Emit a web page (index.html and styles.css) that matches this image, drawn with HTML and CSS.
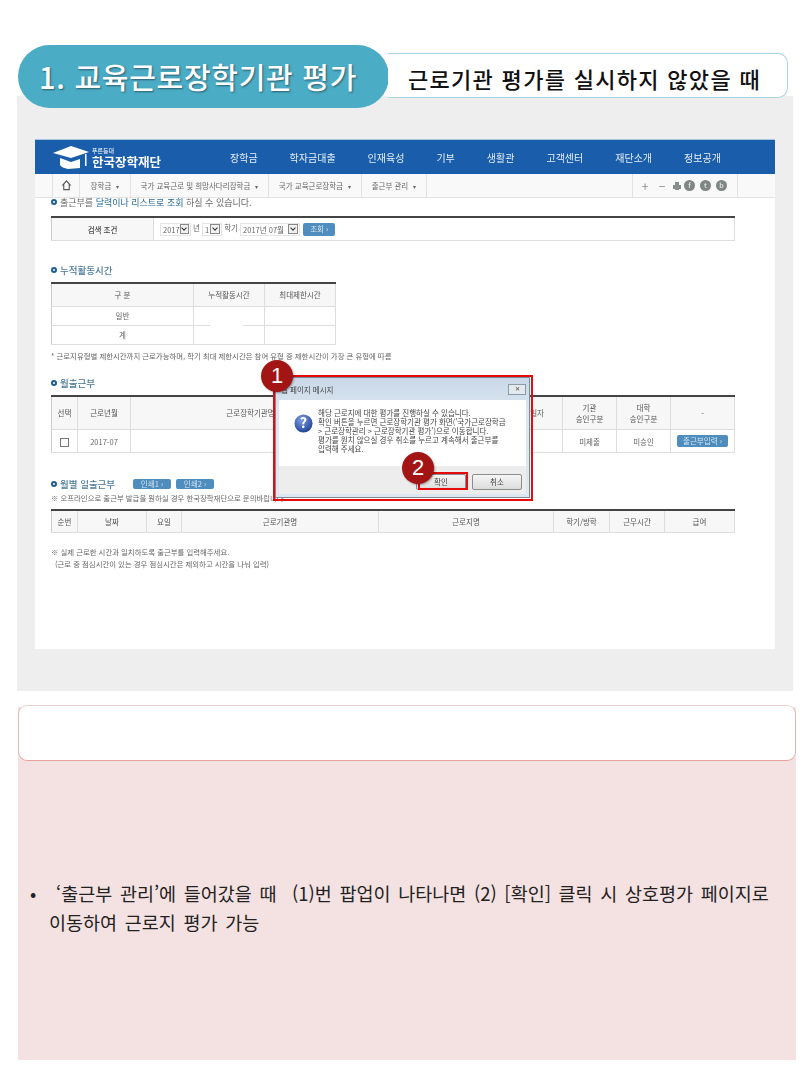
FILE: index.html
```html
<!DOCTYPE html>
<html lang="ko">
<head>
    <meta charset="UTF-8">
    <meta name="viewport" content="width=device-width, initial-scale=1.0">
    <title>교육근로장학기관 평가</title>
    <link rel="stylesheet" href="styles.css">
</head>
<body>
    <div class="title-row">
        <h1 class="title-pill">1. 교육근로장학기관 평가</h1>
        <div class="title-sub">근로기관 평가를 실시하지 않았을 때</div>
    </div>

    <div class="gray-panel">
        <div class="shot-wrap">
            <div class="shot">
                <header class="site-head">
                    <div class="logo">
                        <svg class="logo-cap" viewBox="0 0 36 24" width="36" height="24">
                            <path d="M0 8 L18 1 L36 7 L18 13 Z" fill="#fff"/>
                            <path d="M7 13 L18 17 L27 14 L27 23 L15 24 C11 23 8 22 7 20 Z" fill="#fff"/>
                            <path d="M32 9 L33.500 9 L33.500 21 L32 21 Z" fill="#fff"/>
                        </svg>
                        <div class="logo-text">
                            <span class="logo-small">푸른등대</span>
                            <span class="logo-big">한국장학재단</span>
                        </div>
                    </div>
                    <nav class="main-nav">
                        <a>장학금</a>
                        <a>학자금대출</a>
                        <a>인재육성</a>
                        <a>기부</a>
                        <a>생활관</a>
                        <a>고객센터</a>
                        <a>재단소개</a>
                        <a>정보공개</a>
                    </nav>
                </header>

                <div class="sub-nav">
                    <div class="crumb crumb-home">
                        <svg viewBox="0 0 12 12" width="11" height="11">
                            <path d="M6 1 L10 5.500 L9 5.500 L9 10.500 L3 10.500 L3 5.500 L2 5.500 Z" fill="none" stroke="#555" stroke-width="1.200"/>
                        </svg>
                    </div>
                    <div class="crumb crumb-a">장학금 <i>▾</i></div>
                    <div class="crumb crumb-b">국가 교육근로 및 희망사다리장학금 <i>▾</i></div>
                    <div class="crumb crumb-c">국가 교육근로장학금 <i>▾</i></div>
                    <div class="crumb crumb-d">출근부 관리 <i>▾</i></div>
                    <div class="sub-tools">
                        <span class="tool-sign">+</span>
                        <span class="tool-sign">−</span>
                        <svg class="tool-print" viewBox="0 0 10 10" width="10" height="10">
                            <path d="M3 1 H7 V4 H9 V8 H7 V9 H3 V8 H1 V4 H3 Z" fill="#8a8f8c"/>
                        </svg>
                        <span class="tool-dot">f</span>
                        <span class="tool-dot">t</span>
                        <span class="tool-dot">b</span>
                    </div>
                </div>

                <div class="content">
                    <p class="intro"><span class="ring"></span>출근부를 <b>달력이나 리스트로 조회</b> 하실 수 있습니다.</p>

                    <table class="grid search-table">
                        <colgroup><col class="c-search-head"><col></colgroup>
                        <tr>
                            <th>검색 조건</th>
                            <td class="search-cell">
                                <span class="select s-year">2017<u></u></span> 년
                                <span class="select s-term">1<u></u></span> 학기
                                <span class="select s-month">2017년 07월<u></u></span>
                                <span class="btn btn-query">조회 ›</span>
                            </td>
                        </tr>
                    </table>

                    <h2 class="sec sec-total"><span class="ring"></span>누적활동시간</h2>
                    <table class="grid total-table">
                        <colgroup><col class="c-t1"><col class="c-t2"><col></colgroup>
                        <tr class="r-head"><th>구 분</th><th>누적활동시간</th><th>최대제한시간</th></tr>
                        <tr class="r-sm"><td>일반</td><td class="mask-cell"><span class="mask"></span></td><td></td></tr>
                        <tr class="r-sm"><td>계</td><td></td><td></td></tr>
                    </table>
                    <p class="note note-total">* 근로지유형별 제한시간까지 근로가능하며, 학기 최대 제한시간은 참여 유형 중 제한시간이 가장 큰 유형에 따름</p>

                    <h2 class="sec sec-month"><span class="ring"></span>월출근부</h2>
                    <table class="grid month-table">
                        <colgroup>
                            <col class="c-m1"><col class="c-m2"><col class="c-m3"><col class="c-m4">
                            <col class="c-m5"><col class="c-m6"><col>
                        </colgroup>
                        <tr class="r-tall">
                            <th>선택</th><th>근로년월</th><th>근로장학기관명</th><th class="right-txt">승인일자</th>
                            <th>기관<br>승인구분</th><th>대학<br>승인구분</th><th>-</th>
                        </tr>
                        <tr class="r-md">
                            <td><span class="check"></span></td><td>2017-07</td><td></td><td></td>
                            <td>미제출</td><td>미승인</td><td><span class="btn btn-entry">출근부입력 ›</span></td>
                        </tr>
                    </table>

                    <div class="sec-line">
                        <h2 class="sec"><span class="ring"></span>월별 일출근부</h2>
                        <span class="btn btn-print">인쇄1 ›</span>
                        <span class="btn btn-print">인쇄2 ›</span>
                    </div>
                    <p class="note note-off">※ 오프라인으로 출근부 발급을 원하실 경우 한국장학재단으로 문의바랍니다.</p>
                    <table class="grid day-table">
                        <colgroup>
                            <col class="c-d1"><col class="c-d2"><col class="c-d3"><col class="c-d4">
                            <col class="c-d5"><col class="c-d6"><col class="c-d7"><col>
                        </colgroup>
                        <tr>
                            <th>순번</th><th>날짜</th><th>요일</th><th>근로기관명</th>
                            <th>근로지명</th><th>학기/방학</th><th>근무시간</th><th>급여</th>
                        </tr>
                    </table>
                    <p class="note note-a">※ 실제 근로한 시간과 일치하도록 출근부를 입력해주세요.</p>
                    <p class="note note-b">(근로 중 점심시간이 있는 경우 점심시간은 제외하고 시간을 나눠 입력)</p>
                </div>

                <div class="dialog">
                    <div class="dialog-title">
                        <span>웹 페이지 메시지</span>
                        <span class="dialog-close">✕</span>
                    </div>
                    <div class="dialog-body">
                        <svg class="q-icon" viewBox="0 0 20 20" width="19" height="19">
                            <defs>
                                <radialGradient id="qfill" cx="40%" cy="30%" r="75%">
                                    <stop offset="0" stop-color="#7f9fdc"/>
                                    <stop offset="1" stop-color="#1c3f96"/>
                                </radialGradient>
                            </defs>
                            <circle cx="10" cy="10" r="9.500" fill="url(#qfill)"/>
                            <text x="10" y="15" text-anchor="middle" class="q-mark">?</text>
                        </svg>
                        <p>해당 근로지에 대한 평가를 진행하실 수 있습니다.<br>확인 버튼을 누르면 근로장학기관 평가 화면('국가근로장학금<br>&gt; 근로장학관리 &gt; 근로장학기관 평가')으로 이동합니다.<br>평가를 원치 않으실 경우 취소를 누르고 계속해서 출근부를<br>입력해 주세요.</p>
                    </div>
                    <div class="dialog-foot">
                        <span class="dialog-btn">확인</span>
                        <span class="dialog-btn">취소</span>
                    </div>
                </div>
            </div>

            <div class="red-frame frame-dialog"></div>
            <div class="red-frame frame-ok"></div>
            <div class="badge badge-one">1</div>
            <div class="badge badge-two">2</div>
        </div>
    </div>

    <section class="pink-panel">
        <div class="pink-head"></div>
        <ul class="bullets">
            <li>‘출근부 관리’에 들어갔을 때 &nbsp;(1)번 팝업이 나타나면 (2) [확인] 클릭 시 상호평가 페이지로 이동하여 근로지 평가 가능</li>
        </ul>
    </section>
</body>
</html>
```

FILE: styles.css
```css
body {
    margin: 0;
    width: 810px;
    height: 1080px;
    overflow: hidden;
    background: white;
    font-family: "Noto Sans CJK KR", "Noto Sans", sans-serif;
    color: #333;
}

/* title */
.title-row {
    position: relative;
    z-index: 2;
    display: flex;
    align-items: flex-start;
    height: 51px;
    padding: 45px 0 0 18px;
}
.title-pill {
    width: 371px;
    height: 63px;
    margin: 0;
    padding-left: 21px;
    box-sizing: border-box;
    border-radius: 32px;
    background: #4bacc6;
    color: white;
    font-size: 29px;
    font-weight: 500;
    line-height: 62px;
    letter-spacing: 0.7px;
    white-space: nowrap;
    text-shadow: 1px 1px 2px #2c5d6b;
}
.title-sub {
    width: 400px;
    height: 45px;
    margin: 8px 0 0 -1px;
    padding-left: 20px;
    box-sizing: border-box;
    background: white;
    border: 1px solid #a5d5e2;
    border-left: none;
    border-radius: 0 10px 10px 0;
    color: #111;
    font-size: 22px;
    font-weight: 500;
    line-height: 48px;
    letter-spacing: 1.3px;
    white-space: nowrap;
}

/* gray panel with the captured page */
.gray-panel {
    width: 776px;
    height: 595px;
    margin-left: 17px;
    padding: 43px 18px 42px;
    box-sizing: border-box;
    background: #eee;
}
.shot-wrap {
    position: relative;
    width: 740px;
    height: 510px;
}
.shot {
    position: relative;
    height: 510px;
    overflow: hidden;
    background: white;
    filter: blur(0.4px);
}

.site-head {
    display: flex;
    align-items: center;
    height: 34px;
    background: #1a5dab;
    border-top: 1px solid #a9c6e0;
    color: white;
}
.logo {
    display: flex;
    align-items: center;
    width: 193px;
    padding-left: 18px;
    box-sizing: border-box;
}
.logo-text {
    display: flex;
    flex-direction: column;
    margin-left: 3px;
}
.logo-small {
    font-size: 6px;
    line-height: 9px;
}
.logo-big {
    font-size: 12.500px;
    font-weight: 700;
    line-height: 14px;
    white-space: nowrap;
}
.main-nav {
    display: flex;
    gap: 32px;
    margin-left: 2px;
    font-size: 10px;
    white-space: nowrap;
}
.main-nav a {
    color: #e6eef7;
}

.sub-nav {
    display: flex;
    height: 24px;
    margin: 0;
    padding-left: 17px;
    background: #f9f9f9;
    border-bottom: 1px solid #e4e4e4;
    box-sizing: border-box;
    font-size: 7.500px;
    line-height: 23px;
    color: #666;
}
.crumb {
    height: 23px;
    box-sizing: border-box;
    border-left: 1px solid #e2e2e2;
    text-align: center;
    white-space: nowrap;
}
.crumb i {
    font-style: normal;
    font-size: 6px;
    margin-left: 3px;
}
.crumb-home { width: 27px; display: flex; align-items: center; justify-content: center; }
.crumb-a { width: 51px; }
.crumb-b { width: 138px; }
.crumb-c { width: 93px; }
.crumb-d { width: 66px; border-right: 1px solid #e2e2e2; }
.sub-tools {
    display: flex;
    align-items: center;
    gap: 5px;
    width: 106px;
    height: 23px;
    margin-left: 205px;
    padding-left: 6px;
    box-sizing: border-box;
    border-left: 1px solid #e2e2e2;
    border-right: 1px solid #e2e2e2;
}
.tool-sign {
    width: 12px;
    font-size: 12px;
    text-align: center;
    color: #8a8f8c;
}
.tool-print { margin: 0 -3px 0 -1px; }
.tool-dot {
    width: 11px;
    height: 11px;
    border-radius: 50%;
    background: #7f8683;
    color: #ddd;
    font-size: 7px;
    font-weight: 700;
    line-height: 10px;
    text-align: center;
}

/* page content */
.content {
    padding: 0 39px 0 16px;
    font-size: 7.500px;
    color: #666;
}
.ring {
    display: inline-block;
    width: 2px;
    height: 2px;
    margin-right: 3px;
    vertical-align: 1px;
    border: 2px solid #1b5f92;
    border-radius: 50%;
}
.intro {
    margin: 0;
    height: 18px;
    font-size: 9px;
    line-height: 9px;
    white-space: nowrap;
}
.intro b {
    font-weight: 400;
    color: #1f6a99;
}
.sec {
    margin: 0;
    font-size: 9.500px;
    font-weight: 500;
    line-height: 12px;
    color: #4a7a99;
    white-space: nowrap;
}
.sec-total { margin-top: 23px; height: 18px; }
.sec-month { margin-top: 15px; height: 18px; }

.grid {
    width: 684px;
    table-layout: fixed;
    border-collapse: collapse;
    border-top: 2px solid #444;
}
.grid th, .grid td {
    padding: 0;
    border: 1px solid #ddd;
    border-top: none;
    text-align: center;
    font-weight: 400;
    line-height: 11px;
    color: #666;
}
.grid tr > :first-child { border-left-color: #ccc; }
.grid th { background: #f7f7f8; color: #555; }
.grid td { background: white; }

.search-table { height: 25px; margin-top: 0; }
.c-search-head { width: 102px; }
.search-table th { font-weight: 500; color: #444; }
.grid .search-cell {
    padding-left: 6px;
    text-align: left;
    white-space: nowrap;
}
.select {
    display: inline-flex;
    align-items: center;
    justify-content: space-between;
    height: 13px;
    padding-left: 2px;
    box-sizing: border-box;
    vertical-align: middle;
    border: 1px solid #e4e4e4;
}
/* dropdown arrow */
.select u {
    display: flex;
    justify-content: center;
    width: 10px;
    height: 10px;
    margin-right: 1px;
    background: #f1f1f1;
    border: 1px solid #888;
    box-sizing: border-box;
}
.select u::before {
    content: "";
    width: 3px;
    height: 3px;
    margin-top: 1px;
    border-right: 1.500px solid #333;
    border-bottom: 1.500px solid #333;
    transform: rotate(45deg);
}
.s-year { width: 31px; }
.s-term { width: 20px; }
.s-month { width: 60px; }
.btn {
    display: inline-block;
    background: #4e8dbd;
    border-radius: 2px;
    color: #d8e6f1;
    text-align: center;
    white-space: nowrap;
}
.btn-query {
    width: 32px;
    height: 13px;
    margin-left: 1px;
    line-height: 12px;
    vertical-align: middle;
}

.total-table { width: 285px; }
.c-t1 { width: 142px; }
.c-t2 { width: 71px; }
.r-head { height: 23px; }
.r-sm { height: 19px; }
.mask-cell { position: relative; }
.mask {
    position: absolute;
    left: 16px;
    bottom: -2px;
    width: 33px;
    height: 4px;
    background: white;
}
.note {
    margin: 0;
    font-size: 7.400px;
    line-height: 12px;
    white-space: nowrap;
}
.note-total { margin-top: 5px; }

.c-m1 { width: 26px; }
.c-m2 { width: 53px; }
.c-m3 { width: 240px; }
.c-m4 { width: 192px; }
.c-m5 { width: 54px; }
.c-m6 { width: 54px; }
.r-tall { height: 34px; }
.r-md { height: 23px; }
.grid .right-txt { text-align: right; padding-right: 18px; }
.check {
    display: inline-block;
    width: 7px;
    height: 7px;
    vertical-align: middle;
    border: 1px solid #777;
}
.btn-entry {
    width: 51px;
    height: 12px;
    line-height: 11px;
    vertical-align: middle;
}

.sec-line {
    display: flex;
    align-items: center;
    gap: 5px;
    height: 12px;
    margin-top: 25px;
}
.sec-line .sec { width: 77px; }
.btn-print {
    width: 38px;
    height: 10px;
    line-height: 9px;
}
.note-off { margin-top: 2px; }
.day-table { height: 24px; margin-top: 5px; }
.c-d1 { width: 26px; }
.c-d2 { width: 69px; }
.c-d3 { width: 35px; }
.c-d4 { width: 197px; }
.c-d5 { width: 175px; }
.c-d6 { width: 56px; }
.c-d7 { width: 55px; }
.note-a { margin-top: 13px; }
.note-b { margin-left: 4px; }

/* message dialog, sits over the page */
.dialog {
    position: absolute;
    left: 240px;
    top: 238px;
    width: 255px;
    height: 121px;
    display: flex;
    flex-direction: column;
    box-sizing: border-box;
    background: linear-gradient(#c9d8e8, #dde7f1 30%);
    border: 1px solid #7b8b9b;
    padding: 0 3px 3px;
    color: #444;
    font-size: 7.500px;
}
.dialog-title {
    display: flex;
    align-items: center;
    justify-content: space-between;
    height: 22px;
    padding-left: 2px;
    flex: none;
}
.dialog-close {
    width: 16px;
    height: 9px;
    border: 1px solid #8c99a6;
    background: #e4e9ee;
    font-size: 6px;
    line-height: 8px;
    text-align: center;
}
.dialog-body {
    display: flex;
    height: 66px;
    flex: none;
    padding: 8px 0 0 15px;
    box-sizing: border-box;
    background: white;
}
.q-icon { margin: 6px 5px 0 0; flex: none; overflow: visible; }
.q-mark {
    fill: white;
    font-size: 15px;
    font-weight: 700;
}
.dialog-body p {
    margin: 0;
    line-height: 9px;
    white-space: nowrap;
}
.dialog-foot {
    display: flex;
    flex: 1;
    justify-content: flex-end;
    align-items: center;
    gap: 6px;
    padding: 3px 4px 0 0;
    box-sizing: border-box;
    background: #ededed;
}
.dialog-btn {
    width: 48px;
    height: 14px;
    border: 1px solid #8d8d8d;
    border-radius: 2px;
    background: linear-gradient(#f6f6f6, #dcdcdc);
    line-height: 13px;
    text-align: center;
}

/* callouts */
.red-frame {
    position: absolute;
    box-sizing: border-box;
    border: 2px solid #e30b0b;
}
.frame-dialog { left: 238px; top: 236px; width: 260px; height: 126px; }
.frame-ok { left: 383px; top: 333px; width: 50px; height: 18px; }
.badge {
    position: absolute;
    width: 32px;
    height: 32px;
    border-radius: 50%;
    background: #a31414;
    box-shadow: 1px 1px 2px rgba(0,0,0,0.35);
    color: white;
    font-family: "Liberation Sans", sans-serif;
    font-size: 22px;
    line-height: 32px;
    text-align: center;
}
.badge-one { left: 226px; top: 221px; }
.badge-two { left: 367px; top: 313px; }

/* bottom panel */
.pink-panel {
    width: 778px;
    height: 353px;
    margin: 16px 0 0 18px;
    background: #f4e1e1;
}
.pink-head {
    position: relative;
    top: -2px;
    height: 56px;
    box-sizing: border-box;
    background: white;
    border: 1px solid #e9b4b4;
    border-top-color: #eccfcf;
    border-bottom-color: #e9a0a0;
    border-radius: 9px;
}
.bullets {
    margin: 0;
    padding: 116px 18px 0 31px;
    color: #222;
    font-size: 18.500px;
    line-height: 29px;
    word-spacing: 2.500px;
    word-break: keep-all;
    list-style: none;
}
.bullets li {
    position: relative;
    text-indent: 7px;
}
.bullets li::before {
    content: "•";
    position: absolute;
    left: -19px;
    text-indent: 0;
}
```
